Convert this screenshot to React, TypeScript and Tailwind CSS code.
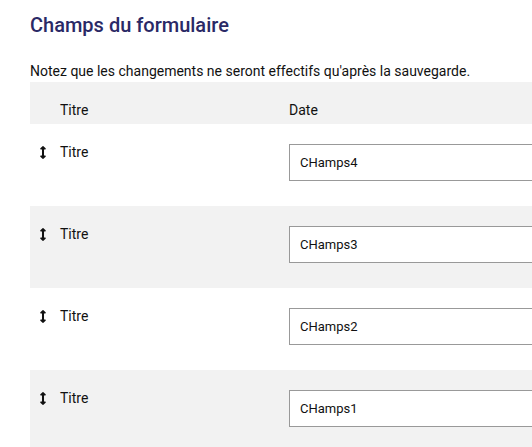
import { FaArrowsAltV } from "react-icons/fa";

const FIELDS = ["CHamps4", "CHamps3", "CHamps2", "CHamps1"];

export default function App() {
  return (
    <div className="min-h-screen overflow-hidden bg-white pl-[30px] font-['Roboto',sans-serif] text-[#111]">
      <h1 className="pt-[12px] text-[20px] font-medium leading-[26px] text-[#2a2966]">
        Champs du formulaire
      </h1>
      <p className="mt-[23px] text-[14px] leading-[20px]">
        Notez que les changements ne seront effectifs qu'après la sauvegarde.
      </p>
      <div className="mt-[1px]">
        <div className="flex h-[42px] bg-[#f2f2f2] pt-[18px] text-[14px] leading-[20px]">
          <div className="w-[259px] pl-[30px]">Titre</div>
          <div>Date</div>
        </div>
        {FIELDS.map((name, i) => (
          <div
            key={name}
            className={`flex h-[82px] text-[14px] ${i % 2 === 1 ? "bg-[#f2f2f2]" : "bg-white"}`}
          >
            <div className="flex w-[259px] shrink-0 items-start pt-[18px]">
              <FaArrowsAltV className="ml-[9px] mt-[4px] h-[13px] w-[8px] text-[#111]" />
              <span className="ml-[13px] leading-[20px]">Titre</span>
            </div>
            <div className="shrink-0 pt-[20px]">
              <div className="flex h-[37px] w-[300px] items-center border border-[#999] bg-white pl-[10px] text-[13px]">
                {name}
              </div>
            </div>
          </div>
        ))}
      </div>
    </div>
  );
}
